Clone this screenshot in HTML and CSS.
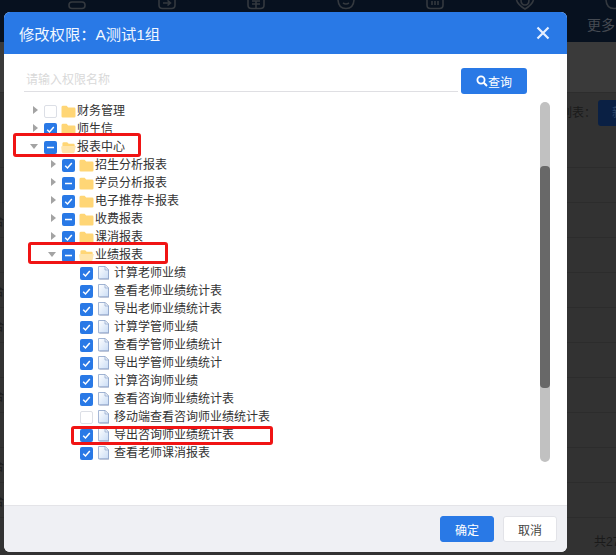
FILE: index.html
```html
<!DOCTYPE html>
<html lang="zh-CN">
<head>
<meta charset="utf-8">
<title>修改权限</title>
<link rel="stylesheet" href="styles.css">
</head>
<body>
<svg class="defs" width="0" height="0" aria-hidden="true">
  <defs>
    <linearGradient id="paper" x1="0" y1="0" x2="1" y2="1"><stop offset="0" stop-color="#fff"/><stop offset="1" stop-color="#c9dcf5"/></linearGradient>
    <symbol id="folder" viewBox="0 0 15 13"><path d="M0.5 2.2Q0.5 0.8 2 0.8H5.6L7.2 2.6H13.2Q14.5 2.6 14.5 4V11.2Q14.5 12.6 13.2 12.6H1.8Q0.5 12.6 0.5 11.2Z" fill="#ffd676"/></symbol>
    <symbol id="folder-open" viewBox="0 0 16 13"><path d="M1.5 2.2Q1.5 0.8 3 0.8H6.6L8.2 2.6H13.6Q14.6 2.6 14.6 4V5.5H1.5Z" fill="#ffd676"/><path d="M1.5 5H15.8L14.4 11.6Q14.2 12.6 13 12.6H2.6Q1.2 12.6 0.9 11.4L0.2 6.2Q0.2 5 1.5 5Z" fill="#ffe5ac"/></symbol>
    <symbol id="file" viewBox="0 0 12 14"><path d="M1.5 0.5H7.5L11 4V13.5H1.5Z" fill="#9aa3bd"/><path d="M0.5 0.5H7L10.5 4V12.8H0.5Z" fill="url(#paper)" stroke="#8fa6cc" stroke-width="0.8"/><path d="M7 0.7V4H10.3" fill="#e8eff9" stroke="#8fa6cc" stroke-width="0.7"/></symbol>
    <symbol id="tick" viewBox="0 0 13 13"><path d="M3.2 6.8L5.5 9L9.8 4" fill="none" stroke="#fff" stroke-width="1.5"/></symbol>
    <symbol id="dash" viewBox="0 0 13 13"><path d="M3 6.5H10" fill="none" stroke="#fff" stroke-width="1.6"/></symbol>
  </defs>
</svg>

<div class="backdrop">
  <div class="topnav">
    <svg class="nav-ico" viewBox="0 0 24 10"><rect x="4" y="2" width="16" height="6.5" rx="3"/></svg>
    <svg class="nav-ico" viewBox="0 0 24 10"><path d="M4 0V5Q4 8.5 7.5 8.5H16.5Q20 8.5 20 5V0M8 3H15M12.5 0.5L15.5 3L12.5 5.5"/></svg>
    <svg class="nav-ico" viewBox="0 0 24 10"><path d="M4 0V5Q4 8.5 7.5 8.5H16.5Q20 8.5 20 5V0M8 1H16M8 4H16M12 1V8"/></svg>
    <svg class="nav-ico" viewBox="0 0 24 10"><path d="M4 0Q4.5 8.5 12 8.5Q19.5 8.5 20 0M9 3Q12 5 15 3"/></svg>
    <svg class="nav-ico" viewBox="0 0 24 10"><path d="M4 0V5Q4 8.5 7.5 8.5H16.5Q20 8.5 20 5V0M9 1V5M12 1V5M15 1V5"/></svg>
    <svg class="nav-ico" viewBox="0 0 24 10"><path d="M3.5 0Q5 5 12 9Q19 5 20.5 0M8 0Q8 5 12 5Q16 5 16 0"/></svg>
    <svg class="nav-ico" viewBox="0 0 24 10"><path d="M4 0Q4.5 8.5 12 8.5Q19.5 8.5 20 0"/></svg>
  </div>
  <span class="more">更多</span>
  <div class="band"></div>
  <div class="rows">
    <div class="page-row"></div>
    <div class="page-row"><span class="cell">合</span></div>
    <div class="page-row"></div>
    <div class="page-row"><span class="cell">合</span></div>
    <div class="page-row"><span class="cell">合</span></div>
    <div class="page-row"></div>
    <div class="page-row"><span class="cell">合</span></div>
    <div class="page-row"></div>
    <div class="page-row"><span class="cell">合</span></div>
    <div class="page-row"><span class="cell">合</span></div>
  </div>
  <div class="page-label">列表：</div>
  <div class="page-btn">新</div>
  <div class="page-total">共27</div>
</div>

<div class="modal">
  <header class="modal-head">
    <h1 class="modal-title">修改权限：A测试1组</h1>
    <svg class="close" width="14" height="14" viewBox="0 0 14 14"><path d="M1.5 1.5L12.5 12.5M12.5 1.5L1.5 12.5" stroke="#e6efff" stroke-width="2.2" fill="none"/></svg>
  </header>
  <div class="modal-body">
    <div class="search">
      <div class="search-input">请输入权限名称</div>
      <button class="search-btn">
        <svg width="12" height="12" viewBox="0 0 12 12"><circle cx="5" cy="5" r="3.6" fill="none" stroke="#fff" stroke-width="1.8"/><path d="M7.8 7.8L11 11" stroke="#fff" stroke-width="2"/></svg>查询
      </button>
    </div>
    <div class="tree-wrap">
      <ul class="tree">
        <li class="row l0"><i class="arrow right"></i><span class="cb off"></span><svg class="ico"><use href="#folder"/></svg><span>财务管理</span></li>
        <li class="row l0"><i class="arrow right"></i><span class="cb"><svg><use href="#tick"/></svg></span><svg class="ico"><use href="#folder"/></svg><span>师生信</span></li>
        <li class="row l0"><i class="arrow down"></i><span class="cb"><svg><use href="#dash"/></svg></span><svg class="ico"><use href="#folder-open"/></svg><span>报表中心</span></li>
        <li class="row l1"><i class="arrow right"></i><span class="cb"><svg><use href="#tick"/></svg></span><svg class="ico"><use href="#folder"/></svg><span>招生分析报表</span></li>
        <li class="row l1"><i class="arrow right"></i><span class="cb"><svg><use href="#dash"/></svg></span><svg class="ico"><use href="#folder"/></svg><span>学员分析报表</span></li>
        <li class="row l1"><i class="arrow right"></i><span class="cb"><svg><use href="#tick"/></svg></span><svg class="ico"><use href="#folder"/></svg><span>电子推荐卡报表</span></li>
        <li class="row l1"><i class="arrow right"></i><span class="cb"><svg><use href="#dash"/></svg></span><svg class="ico"><use href="#folder"/></svg><span>收费报表</span></li>
        <li class="row l1"><i class="arrow right"></i><span class="cb"><svg><use href="#tick"/></svg></span><svg class="ico"><use href="#folder"/></svg><span>课消报表</span></li>
        <li class="row l1"><i class="arrow down"></i><span class="cb"><svg><use href="#dash"/></svg></span><svg class="ico"><use href="#folder-open"/></svg><span>业绩报表</span></li>
        <li class="row l2"><span class="cb"><svg><use href="#tick"/></svg></span><svg class="ico file"><use href="#file"/></svg><span>计算老师业绩</span></li>
        <li class="row l2"><span class="cb"><svg><use href="#tick"/></svg></span><svg class="ico file"><use href="#file"/></svg><span>查看老师业绩统计表</span></li>
        <li class="row l2"><span class="cb"><svg><use href="#tick"/></svg></span><svg class="ico file"><use href="#file"/></svg><span>导出老师业绩统计表</span></li>
        <li class="row l2"><span class="cb"><svg><use href="#tick"/></svg></span><svg class="ico file"><use href="#file"/></svg><span>计算学管师业绩</span></li>
        <li class="row l2"><span class="cb"><svg><use href="#tick"/></svg></span><svg class="ico file"><use href="#file"/></svg><span>查看学管师业绩统计</span></li>
        <li class="row l2"><span class="cb"><svg><use href="#tick"/></svg></span><svg class="ico file"><use href="#file"/></svg><span>导出学管师业绩统计</span></li>
        <li class="row l2"><span class="cb"><svg><use href="#tick"/></svg></span><svg class="ico file"><use href="#file"/></svg><span>计算咨询师业绩</span></li>
        <li class="row l2"><span class="cb"><svg><use href="#tick"/></svg></span><svg class="ico file"><use href="#file"/></svg><span>查看咨询师业绩统计表</span></li>
        <li class="row l2"><span class="cb off"></span><svg class="ico file"><use href="#file"/></svg><span>移动端查看咨询师业绩统计表</span></li>
        <li class="row l2"><span class="cb"><svg><use href="#tick"/></svg></span><svg class="ico file"><use href="#file"/></svg><span>导出咨询师业绩统计表</span></li>
        <li class="row l2"><span class="cb"><svg><use href="#tick"/></svg></span><svg class="ico file"><use href="#file"/></svg><span>查看老师课消报表</span></li>
      </ul>
      <div class="scrollbar"><div class="thumb"></div></div>
    </div>
  </div>
  <footer class="modal-foot">
    <button class="btn primary">确定</button>
    <button class="btn">取消</button>
  </footer>
</div>

<div class="mark mark-a"></div>
<div class="mark mark-b"></div>
<div class="mark mark-c"></div>
</body>
</html>
```

FILE: styles.css
```css
* { box-sizing: border-box; }
html, body { margin: 0; height: 100%; overflow: hidden; }
body {
  background: #323232;
  font-family: "Liberation Sans", "Noto Sans CJK SC", sans-serif;
  font-size: 12px;
  color: #333;
  position: relative;
}
.defs { position: absolute; }

.backdrop { position: absolute; inset: 0; overflow: hidden; }
.topnav { height: 42px; background: #07111f; display: flex; align-items: flex-start; gap: 65.5px; padding-left: 65px; }
.nav-ico { width: 24px; height: 10px; flex: none; fill: none; stroke: #34393f; stroke-width: 1.6; }
.more { position: absolute; left: 587px; top: 14px; color: #454a52; font-size: 14px; white-space: nowrap; }
.band { height: 51px; background: #3a3a3a; border-bottom: 1px solid #2d2d2d; }
.rows { margin-top: 74px; border-top: 1px solid #2c2c2c; }
.page-row { height: 35px; border-bottom: 1px solid #2c2c2c; display: flex; align-items: center; color: #1c1c1c; }
.cell { margin-left: -8px; }
.page-label { position: absolute; left: 560px; top: 103px; color: #1a1a1a; white-space: nowrap; }
.page-btn { position: absolute; left: 598px; top: 100px; width: 30px; height: 26px; background: #0a2044; color: #2c4568; border-radius: 3px; line-height: 26px; padding-left: 14px; white-space: nowrap; }
.page-total { position: absolute; left: 594px; top: 532px; color: #1a1a1a; white-space: nowrap; }

.modal {
  position: absolute;
  left: 4px; top: 12px;
  width: 563px; height: 540px;
  border-radius: 6px;
  background: #fff;
  display: flex; flex-direction: column;
  overflow: hidden;
}
.modal-head {
  height: 42px; flex: none;
  background: #2979e6;
  display: flex; align-items: center; justify-content: space-between;
  padding: 0 17px 0 15px;
}
.modal-title { margin: 0; font-size: 15.3px; font-weight: 400; color: #f2f7ff; }
.close { display: block; }

.modal-body { flex: 1; padding: 14px 17px 0 20px; min-height: 0; }
.search { display: flex; align-items: flex-start; gap: 3px; padding-right: 23px; }
.search-input {
  flex: 1; height: 24px;
  border-bottom: 1px solid #dfdfe3;
  color: #d9d9d9; line-height: 25px; padding-left: 2px;
}
.search-btn {
  width: 66px; height: 26px;
  background: #2979e6; color: #fff; border: 0; border-radius: 3px;
  font: inherit;
  display: flex; align-items: center; justify-content: center; gap: 0;
}

.tree-wrap { display: flex; justify-content: space-between; margin-top: 8px; }
.tree { list-style: none; margin: 0; padding: 0 0 0 6px; flex: 1; }
.row { height: 18px; display: flex; align-items: center; white-space: nowrap; color: #333; }
.row > span:last-child { margin-bottom: 3px; }
.l1 { padding-left: 18px; }
.l2 { padding-left: 50px; }
.arrow { width: 14px; height: 18px; flex: none; display: block; position: relative; }
.arrow.right::before {
  content: ""; position: absolute; left: 3px; top: 4px;
  border-left: 5px solid #a3a3a3; border-top: 4px solid transparent; border-bottom: 4px solid transparent;
}
.arrow.down::before {
  content: ""; position: absolute; left: 0; top: 6px;
  border-top: 5px solid #a3a3a3; border-left: 4px solid transparent; border-right: 4px solid transparent;
}
.cb { width: 13px; height: 13px; flex: none; background: #2979e6; border-radius: 2px; display: block; }
.cb svg { display: block; width: 13px; height: 13px; }
.cb.off { background: #fff; border: 1px solid #dcdfe6; }
.ico { width: 15px; height: 13px; flex: none; margin: 0 1px 0 4px; display: block; }
.ico.file { width: 12px; height: 14px; margin: 0 4px 0 5px; }

.scrollbar { width: 10px; height: 360px; flex: none; background: #c1c1c1; border-radius: 5px; overflow: hidden; padding-top: 64px; }
.thumb { width: 10px; height: 222px; background: #686868; border-radius: 4px; }

.modal-foot {
  height: 47px; flex: none;
  background: #eff0f4;
  border-top: 1px solid #e4e4e8;
  display: flex; justify-content: flex-end; align-items: flex-start; gap: 9px;
  padding: 10px 10px 0 0;
}
.btn {
  width: 54px; height: 26px;
  background: #fff; color: #444;
  border: 1px solid #e2e3e8; border-radius: 3px;
  font: inherit; padding: 0;
}
.btn.primary { background: #2979e6; border-color: #2979e6; color: #fff; }

.mark { position: absolute; border: 3px solid #f01414; border-radius: 3px; pointer-events: none; }
.mark-a { left: 13px; top: 133px; width: 128px; height: 24px; }
.mark-b { left: 28px; top: 242px; width: 140px; height: 22px; }
.mark-c { left: 71px; top: 426px; width: 202px; height: 19px; }
```
